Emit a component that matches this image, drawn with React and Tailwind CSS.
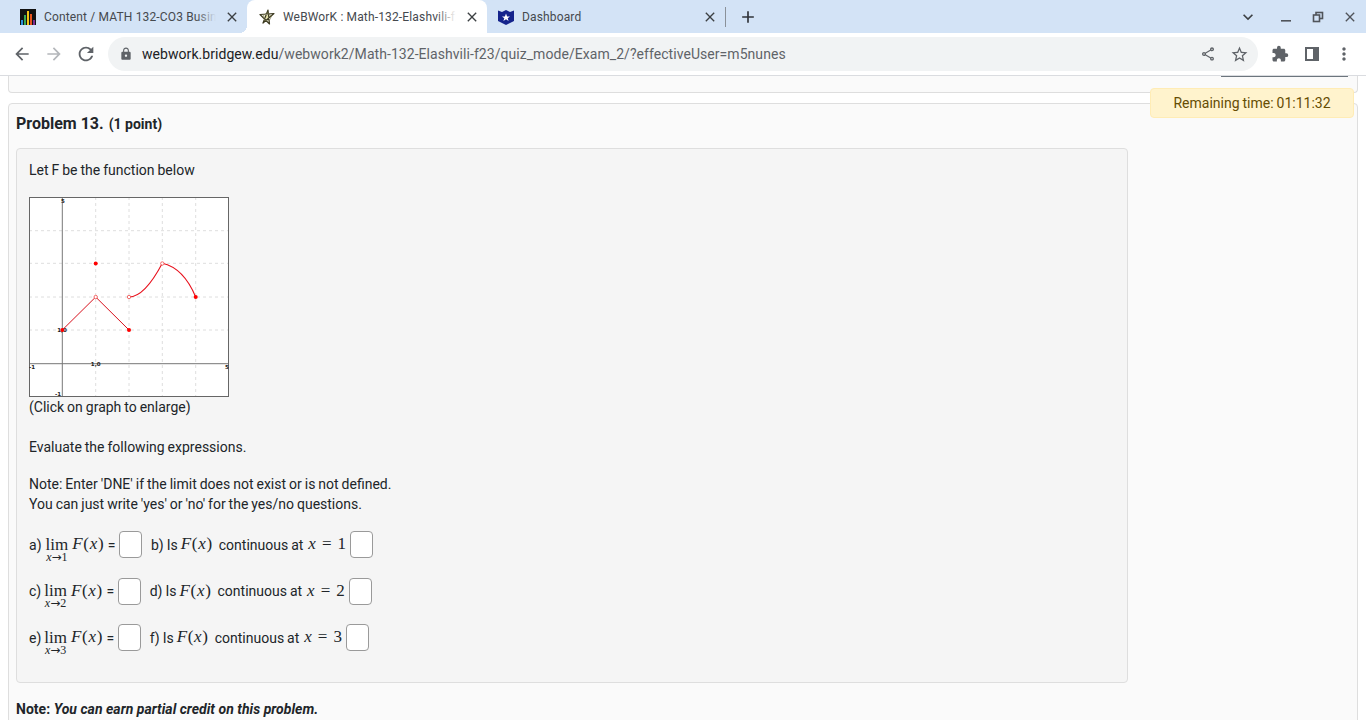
import React from 'react'
import {
  MdAdd,
  MdArrowBack,
  MdArrowForward,
  MdClose,
  MdExtension,
  MdKeyboardArrowDown,
  MdLock,
  MdMoreVert,
  MdOutlineShare,
  MdOutlineStarBorder,
  MdRefresh,
} from 'react-icons/md'

function BarsFavicon() {
  return (
    <svg width="16" height="16" viewBox="0 0 16 16" className="shrink-0">
      <rect width="16" height="16" fill="#111" />
      <rect x="1" y="11" width="2" height="5" fill="#2b8fd8" />
      <rect x="4" y="6" width="2" height="10" fill="#35a852" />
      <rect x="7" y="2" width="2" height="14" fill="#f2c313" />
      <rect x="10" y="5" width="2" height="11" fill="#e8541e" />
      <rect x="13" y="11" width="2" height="5" fill="#7b2d90" />
    </svg>
  )
}

function StarFavicon() {
  return (
    <svg width="16" height="16" viewBox="0 0 16 16" className="shrink-0" fill="none">
      <path d="M8 4 9.5 11 4 6.5 12 6.3 5.8 11Z" fill="#e4e0a8" />
      <path d="M9 1 10.5 15 1 5.5 15 4.5 4 14Z" stroke="#3c3a20" strokeWidth="1.2" strokeLinejoin="round" />
      <path d="M8 3.5 12.5 7 10 12 5.5 11.5 4 6.5Z" stroke="#77754a" strokeWidth="0.7" />
    </svg>
  )
}

function ShieldFavicon() {
  return (
    <svg width="16" height="16" viewBox="0 0 16 16" className="shrink-0">
      <path d="M0 1.5 4 3 8 1 12 3 16 1.5V12L8 16 0 12Z" fill="#14238c" />
      <path d="M8 4.5 9.1 7.4H12L9.7 9.2 10.6 12 8 10.3 5.4 12 6.3 9.2 4 7.4H6.9Z" fill="#fff" />
    </svg>
  )
}

function Tab({ icon, title, active, width, fade }) {
  return (
    <div
      className={`relative flex items-center h-[33px] shrink-0 rounded-t-lg pr-[7px] ${
        active ? 'bg-white' : 'bg-[#d3e3f6]'
      } ${width}`}
    >
      {active && (
        <>
          <div className="absolute right-full bottom-0 w-2 h-2 bg-[radial-gradient(circle_at_0_0,#d3e3f6_8px,white_8px)]" />
          <div className="absolute left-full bottom-0 w-2 h-2 bg-[radial-gradient(circle_at_100%_0,#d3e3f6_8px,white_8px)]" />
        </>
      )}
      {icon}
      <div className="relative flex-1 min-w-0 ml-2 overflow-hidden whitespace-nowrap text-xs tracking-[0.15px] text-[#45494e]">
        {title}
        {fade && (
          <div
            className={`absolute right-0 top-0 bottom-0 w-5 bg-gradient-to-r from-transparent ${
              active ? 'to-white' : 'to-[#d3e3f6]'
            }`}
          />
        )}
      </div>
      <MdClose className="shrink-0 ml-2 text-[#3c4043]" size={16} />
    </div>
  )
}

function TabStrip() {
  return (
    <div className="flex items-center h-[33px] bg-[#d3e3f6] pl-2">
      <Tab icon={<BarsFavicon />} title="Content / MATH 132-CO3 Business" width="w-[239px] pl-3" fade />
      <Tab icon={<StarFavicon />} title="WeBWorK : Math-132-Elashvili-f23" width="w-[240px] pl-3" active fade />
      <Tab icon={<ShieldFavicon />} title="Dashboard" width="w-[238px] pl-[11px]" />
      <div className="w-px h-5 bg-[#8a9199]" />
      <MdAdd className="ml-3 text-[#30343a]" size={20} />
      <div className="flex-1" />
      <MdKeyboardArrowDown className="text-[#3c4043] mr-[22px]" size={20} />
      <svg width="12" height="12" viewBox="0 0 12 12" className="mr-5">
        <rect x="1" y="9" width="10" height="1.6" fill="#50545a" />
      </svg>
      <svg width="12" height="12" viewBox="0 0 12 12" fill="none" stroke="#50545a" strokeWidth="1.6" className="mr-[18px]">
        <rect x="4" y="1.5" width="6.5" height="6" />
        <rect x="1.5" y="4" width="6" height="6.5" fill="#d3e3f6" />
      </svg>
      <MdClose className="text-[#50545a] mr-2" size={16} />
    </div>
  )
}

function Toolbar() {
  return (
    <div className="flex items-center h-[43px] pt-1 pb-1 bg-white border-b border-[#dadce0]">
      <div className="flex items-center w-[108px] pl-3 text-[#5f6368]">
        <MdArrowBack size={20} />
        <MdArrowForward size={20} className="ml-3 text-[#b4b7bb]" />
        <MdRefresh size={22} className="ml-[11px]" />
      </div>
      <div className="flex items-center h-[34px] w-[1150px] rounded-full bg-[#f1f3f4] pl-[11px] pr-[9px]">
        <MdLock size={14} className="text-[#5f6368]" />
        <span className="ml-[9px] text-sm tracking-[0.055px] text-[#5f6368] whitespace-nowrap">
          <span className="text-[#202124]">webwork.bridgew.edu</span>
          /webwork2/Math-132-Elashvili-f23/quiz_mode/Exam_2/?effectiveUser=m5nunes
        </span>
        <div className="flex-1" />
        <MdOutlineShare size={16} className="text-[#5f6368]" />
        <MdOutlineStarBorder size={19} className="ml-[14px] text-[#5f6368]" />
      </div>
      <MdExtension size={18} className="ml-[13px] text-[#5f6368]" />
      <svg width="14" height="14" viewBox="0 0 14 14" className="ml-[16px]">
        <rect x="1" y="1" width="12" height="12" fill="none" stroke="#5f6368" strokeWidth="2" />
        <rect x="8" y="1" width="5" height="12" fill="#5f6368" />
      </svg>
      <MdMoreVert size={20} className="ml-[15px] text-[#5f6368]" />
    </div>
  )
}

function Graph() {
  const xs = [95.7, 129, 162.3, 195.7].map((x) => x - 29)
  const ys = [230.7, 263.3, 297, 330].map((y) => y - 197)
  return (
    <svg width="200" height="200" viewBox="0 0 200 200" className="block bg-white">
      {xs.map((x) => (
        <line key={x} x1={x} x2={x} y1="0" y2="200" stroke="#dedede" strokeDasharray="3 3" />
      ))}
      {ys.map((y) => (
        <line key={y} x1="0" x2="200" y1={y} y2={y} stroke="#dedede" strokeDasharray="3 3" />
      ))}
      <line x1="33.3" x2="33.3" y1="0" y2="200" stroke="#777" />
      <line x1="0" x2="200" y1="166.7" y2="166.7" stroke="#777" />
      <rect x="0.5" y="0.5" width="199" height="199" fill="none" stroke="#666" />
      <g fontFamily="'DejaVu Sans', sans-serif" fontSize="5.5" fontWeight="700" fill="#222" textAnchor="middle">
        <text x="34" y="6">5</text>
        <text x="33" y="135">1,0</text>
        <text x="66.7" y="169">1,0</text>
        <text x="3" y="172">-1</text>
        <text x="198" y="172">5</text>
        <text x="29" y="199">-1</text>
      </g>
      <path d="M33.3 133 66.7 100 100 133" fill="none" stroke="#d8101c" strokeWidth="1" />
      <path d="M100 100C112 100 124 84 133.3 66.3C150 70 160 84 166.7 100" fill="none" stroke="#e8101c" strokeWidth="1.1" />
      <circle cx="33.3" cy="133" r="2" fill="#ff0000" />
      <circle cx="66.7" cy="66.5" r="2" fill="#ff0000" />
      <circle cx="100" cy="133" r="2" fill="#ff0000" />
      <circle cx="166.7" cy="100" r="2" fill="#ff0000" />
      <circle cx="66.7" cy="100" r="1.7" fill="#fff" stroke="#f04a4a" strokeWidth="0.8" />
      <circle cx="100" cy="100" r="1.7" fill="#fff" stroke="#f04a4a" strokeWidth="0.8" />
      <circle cx="133.3" cy="66.5" r="1.7" fill="#fff" stroke="#f04a4a" strokeWidth="0.8" />
    </svg>
  )
}

function Fx() {
  return (
    <span className="font-['Liberation_Serif',serif] text-[17px] tracking-[0.7px] whitespace-nowrap">
      <i>F</i>(<i>x</i>)
    </span>
  )
}

function Lim({ to, margin }) {
  return (
    <span className={`relative inline-block font-['Liberation_Serif',serif] text-[17px] leading-3 ${margin}`}>
      lim
      <span className="absolute left-1/2 -translate-x-1/2 top-3 text-xs leading-3 whitespace-nowrap flex items-center">
        <i>x</i>
        <span className="font-['DejaVu_Sans',sans-serif] text-xs leading-3">→</span>
        {to}
      </span>
    </span>
  )
}

function AnswerBox() {
  return <span className="block w-[23px] h-[27px] bg-white border border-[#9a9a9a] rounded-[4px] shrink-0" />
}

function QuestionRow({ a, b, to, limMargin }) {
  return (
    <div className="flex items-center h-[27px] mb-[19.5px] whitespace-nowrap">
      <span>{a})</span>
      <Lim to={to} margin={limMargin} />
      <Fx />
      <span className="mx-[3.5px]">=</span>
      <AnswerBox />
      <span className="ml-[9px]">{b}) Is&nbsp;</span>
      <Fx />
      <span className="ml-[6px] mr-[5px]">continuous at</span>
      <span className="font-['Liberation_Serif',serif] text-[17px] mr-1 flex gap-[6px]">
        <i>x</i>
        <span>=</span>
        <span>{to}</span>
      </span>
      <AnswerBox />
    </div>
  )
}

export default function App() {
  return (
    <div className="relative w-[1366px] h-[720px] overflow-hidden bg-white font-['Roboto',sans-serif] text-sm text-[#212529]">
      <TabStrip />
      <Toolbar />

      <div className="px-2">
        <div className="h-[17px] bg-[#fafafa] border border-t-0 border-[#dedede] rounded-b-[4px] flex justify-end pr-[9px]">
          <div className="w-[127px] h-px bg-[#6c757d]" />
        </div>

        <div className="mt-[10px] h-[640px] bg-[#fafafa] border border-[#dedede] rounded-[4px] px-[7px]">
          <div className="flex items-baseline h-[44px] pt-[10px] font-bold">
            <span className="text-base leading-5">Problem 13.</span>
            <span className="ml-[5px]">(1 point)</span>
          </div>

          <div className="w-[1112px] h-[535px] bg-[#f5f5f5] border border-[#dedede] rounded-[4px] px-3 pt-[11px] [word-spacing:-0.5px]">
            <p className="leading-5">Let F be the function below</p>
            <div className="mt-[17px] w-[200px]">
              <Graph />
            </div>
            <p className="leading-5">(Click on graph to enlarge)</p>
            <p className="leading-5 mt-5">Evaluate the following expressions.</p>
            <p className="leading-5 mt-[17px]">Note: Enter 'DNE' if the limit does not exist or is not defined.</p>
            <p className="leading-5">You can just write 'yes' or 'no' for the yes/no questions.</p>
            <div className="mt-[17px]">
              <QuestionRow a="a" b="b" to="1" limMargin="mx-1" />
              <QuestionRow a="c" b="d" to="2" limMargin="ml-[3px] mr-1" />
              <QuestionRow a="e" b="f" to="3" limMargin="ml-[3px] mr-1" />
            </div>
          </div>

          <p className="mt-[16px] leading-5 font-bold tracking-[0.03px]">
            Note: <i>You can earn partial credit on this problem.</i>
          </p>
        </div>
      </div>

      <div className="absolute left-[1150px] top-[88px] w-[204px] h-[30px] flex items-center justify-center bg-[#fff3cd] border border-[#ffecb5] rounded-[4px] text-[#664d03] [word-spacing:-0.5px]">
        Remaining time: 01:11:32
      </div>
    </div>
  )
}
